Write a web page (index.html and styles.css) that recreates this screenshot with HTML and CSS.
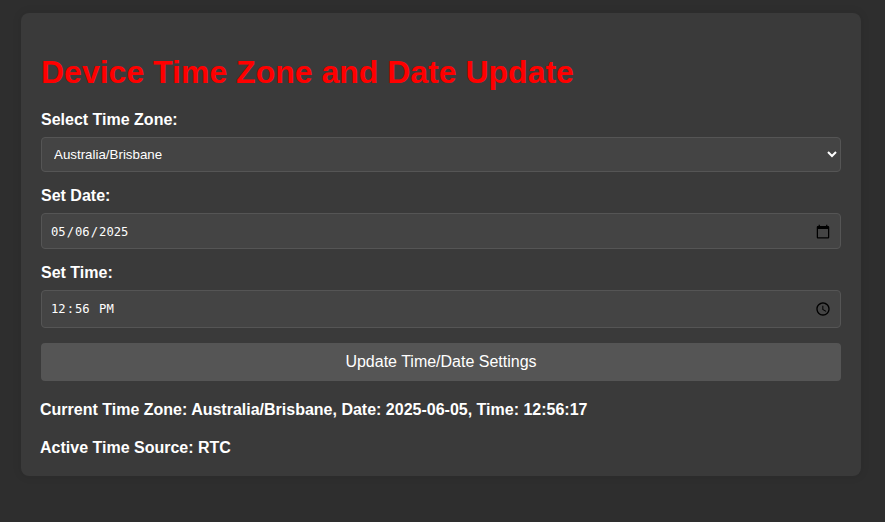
FILE: index.html
```html
<!DOCTYPE html>
<html lang="en">
<head>
<meta charset="utf-8">
<title>Device Time Zone and Date Update</title>
<link rel="stylesheet" href="styles.css">
</head>
<body>
<main class="card">
  <h1 class="title">Device Time Zone and Date Update</h1>
  <form class="form">
    <label class="label" for="tz">Select Time Zone:</label>
    <select class="field field-select" id="tz">
      <option>Australia/Brisbane</option>
    </select>
    <label class="label" for="date">Set Date:</label>
    <input class="field field-date" id="date" type="date" value="2025-05-06">
    <label class="label" for="time">Set Time:</label>
    <input class="field field-time" id="time" type="time" value="12:56">
    <button class="submit" type="button">Update Time/Date Settings</button>
  </form>
  <p class="status">Current Time Zone: Australia/Brisbane, Date: 2025-06-05, Time: 12:56:17</p>
  <p class="status">Active Time Source: RTC</p>
</main>
</body>
</html>
```
FILE: styles.css
```css
* { box-sizing: border-box; }
html, body { height: 100%; }
body {
  margin: 0;
  padding: 13px 24px 0 21px;
  background: #2e2e2e;
  color: #fff;
  font-family: "Liberation Sans", Arial, sans-serif;
  font-size: 16px;
  overflow: hidden;
  color-scheme: dark;
}
.card {
  height: 463px;
  padding: 20px;
  background: #3a3a3a;
  border-radius: 8px;
  box-shadow: 0 0 10px rgba(0, 0, 0, 0.1);
}
.title {
  margin: 21px 0 0;
  font-size: 32px;
  line-height: 37px;
  color: #f00;
  font-weight: bold;
}
.form { display: flex; flex-direction: column; }
.label {
  margin-top: 15px;
  height: 18px;
  font-weight: bold;
  line-height: 18px;
}
.title + .form .label:first-child { margin-top: 20px; }
.field {
  width: 100%;
  margin-top: 8px;
  background: #444;
  color: #fff;
  border: 1px solid #555;
  border-radius: 4px;
  padding: 8px;
  color-scheme: light;
}
.field-select {
  height: 35px;
  padding-left: 8px;
  font-family: "Liberation Sans", Arial, sans-serif;
  font-size: 13.33px;
  color-scheme: dark;
}
.field-date { height: 36px; padding-top: 9px; padding-bottom: 7px; font-size: 12.2px; font-family: "DejaVu Sans Mono", monospace; }
.field-time { height: 38px; font-size: 12.2px; font-family: "DejaVu Sans Mono", monospace; }
.field-date::-webkit-calendar-picker-indicator,
.field-time::-webkit-calendar-picker-indicator {
  width: 16px;
  height: 16px;
  margin-right: 1px;
  padding: 0;
}
.submit {
  height: 38px;
  margin-top: 15px;
  background: #555;
  color: #fff;
  border: 0;
  border-radius: 4px;
  font-family: "Liberation Sans", Arial, sans-serif;
  font-size: 16px;
}
.status {
  margin: 20px 0 0;
  margin-left: -1px;
  font-weight: bold;
  line-height: 18px;
}
```
